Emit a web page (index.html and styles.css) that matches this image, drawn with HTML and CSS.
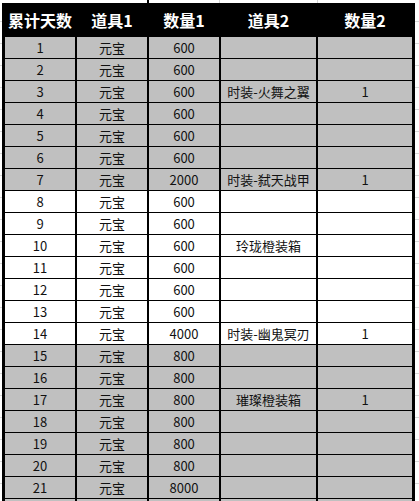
FILE: index.html
```html
<!DOCTYPE html>
<html lang="zh">
<head>
<meta charset="utf-8">
<title>累计天数</title>
<link rel="stylesheet" href="styles.css">
</head>
<body>
<div class="sheet">
  <div class="top-strip"></div>
  <div class="table">
    <div class="cell head">累计天数</div><div class="cell head">道具1</div><div class="cell head">数量1</div><div class="cell head">道具2</div><div class="cell head">数量2</div>

    <div class="cell g">1</div><div class="cell g">元宝</div><div class="cell g">600</div><div class="cell g"></div><div class="cell g"></div>
    <div class="cell g">2</div><div class="cell g">元宝</div><div class="cell g">600</div><div class="cell g"></div><div class="cell g"></div>
    <div class="cell g">3</div><div class="cell g">元宝</div><div class="cell g">600</div><div class="cell g">时装-火舞之翼</div><div class="cell g">1</div>
    <div class="cell g">4</div><div class="cell g">元宝</div><div class="cell g">600</div><div class="cell g"></div><div class="cell g"></div>
    <div class="cell g">5</div><div class="cell g">元宝</div><div class="cell g">600</div><div class="cell g"></div><div class="cell g"></div>
    <div class="cell g">6</div><div class="cell g">元宝</div><div class="cell g">600</div><div class="cell g"></div><div class="cell g"></div>
    <div class="cell g">7</div><div class="cell g">元宝</div><div class="cell g">2000</div><div class="cell g">时装-弑天战甲</div><div class="cell g">1</div>

    <div class="cell w">8</div><div class="cell w">元宝</div><div class="cell w">600</div><div class="cell w"></div><div class="cell w"></div>
    <div class="cell w">9</div><div class="cell w">元宝</div><div class="cell w">600</div><div class="cell w"></div><div class="cell w"></div>
    <div class="cell w">10</div><div class="cell w">元宝</div><div class="cell w">600</div><div class="cell w">玲珑橙装箱</div><div class="cell w"></div>
    <div class="cell w">11</div><div class="cell w">元宝</div><div class="cell w">600</div><div class="cell w"></div><div class="cell w"></div>
    <div class="cell w">12</div><div class="cell w">元宝</div><div class="cell w">600</div><div class="cell w"></div><div class="cell w"></div>
    <div class="cell w">13</div><div class="cell w">元宝</div><div class="cell w">600</div><div class="cell w"></div><div class="cell w"></div>
    <div class="cell w">14</div><div class="cell w">元宝</div><div class="cell w">4000</div><div class="cell w">时装-幽鬼冥刃</div><div class="cell w">1</div>

    <div class="cell g">15</div><div class="cell g">元宝</div><div class="cell g">800</div><div class="cell g"></div><div class="cell g"></div>
    <div class="cell g">16</div><div class="cell g">元宝</div><div class="cell g">800</div><div class="cell g"></div><div class="cell g"></div>
    <div class="cell g">17</div><div class="cell g">元宝</div><div class="cell g">800</div><div class="cell g">璀璨橙装箱</div><div class="cell g">1</div>
    <div class="cell g">18</div><div class="cell g">元宝</div><div class="cell g">800</div><div class="cell g"></div><div class="cell g"></div>
    <div class="cell g">19</div><div class="cell g">元宝</div><div class="cell g">800</div><div class="cell g"></div><div class="cell g"></div>
    <div class="cell g">20</div><div class="cell g">元宝</div><div class="cell g">800</div><div class="cell g"></div><div class="cell g"></div>
    <div class="cell g">21</div><div class="cell g">元宝</div><div class="cell g">8000</div><div class="cell g"></div><div class="cell g"></div>
    <div class="cell g"></div><div class="cell g"></div><div class="cell g"></div><div class="cell g"></div><div class="cell g"></div>
  </div>
</div>
</body>
</html>
```

FILE: styles.css
```css
html, body {
  margin: 0;
  padding: 0;
  background: #ffffff;
  overflow: hidden;
}

body {
  font-family: "Noto Sans CJK SC", "Microsoft YaHei", sans-serif;
  color: #111111;
}

.sheet {
  width: 419px;
  height: 501px;
  overflow: hidden;
  background:
    repeating-linear-gradient(to bottom, transparent 0, transparent 21px, #d9d9d9 21px, #d9d9d9 22px) right top / 4px 100% no-repeat,
    repeating-linear-gradient(to bottom, transparent 0, transparent 21px, #d9d9d9 21px, #d9d9d9 22px) left top / 2px 100% no-repeat,
    #ffffff;
}

.top-strip {
  height: 3px;
  background:
    linear-gradient(to right, transparent 147px, #000 147px, #000 149px, transparent 149px),
    linear-gradient(to right, transparent 219px, #d4d4d4 219px, #d4d4d4 220px, transparent 220px),
    linear-gradient(to right, transparent 317px, #d4d4d4 317px, #d4d4d4 318px, transparent 318px),
    #ffffff;
}

.table {
  margin-left: 2px;
  width: max-content;
  display: grid;
  grid-template-columns: 70px 70px 70px 95px 94px;
  column-gap: 2px;
  row-gap: 1px;
  background: #000000;
  border-left: 3px solid #000000;
  border-right: 3px solid #000000;
}

.cell {
  height: 21px;
  display: flex;
  align-items: center;
  justify-content: center;
  font-size: 13px;
  line-height: 1;
  white-space: nowrap;
}

.cell.head {
  height: 33px;
  padding-top: 1px;
  box-sizing: border-box;
  background: #000000;
  color: #ffffff;
  font-size: 16px;
  font-weight: 700;
}

.cell.g {
  background: #c0c0c0;
}

.cell.w {
  background: #ffffff;
}
```
